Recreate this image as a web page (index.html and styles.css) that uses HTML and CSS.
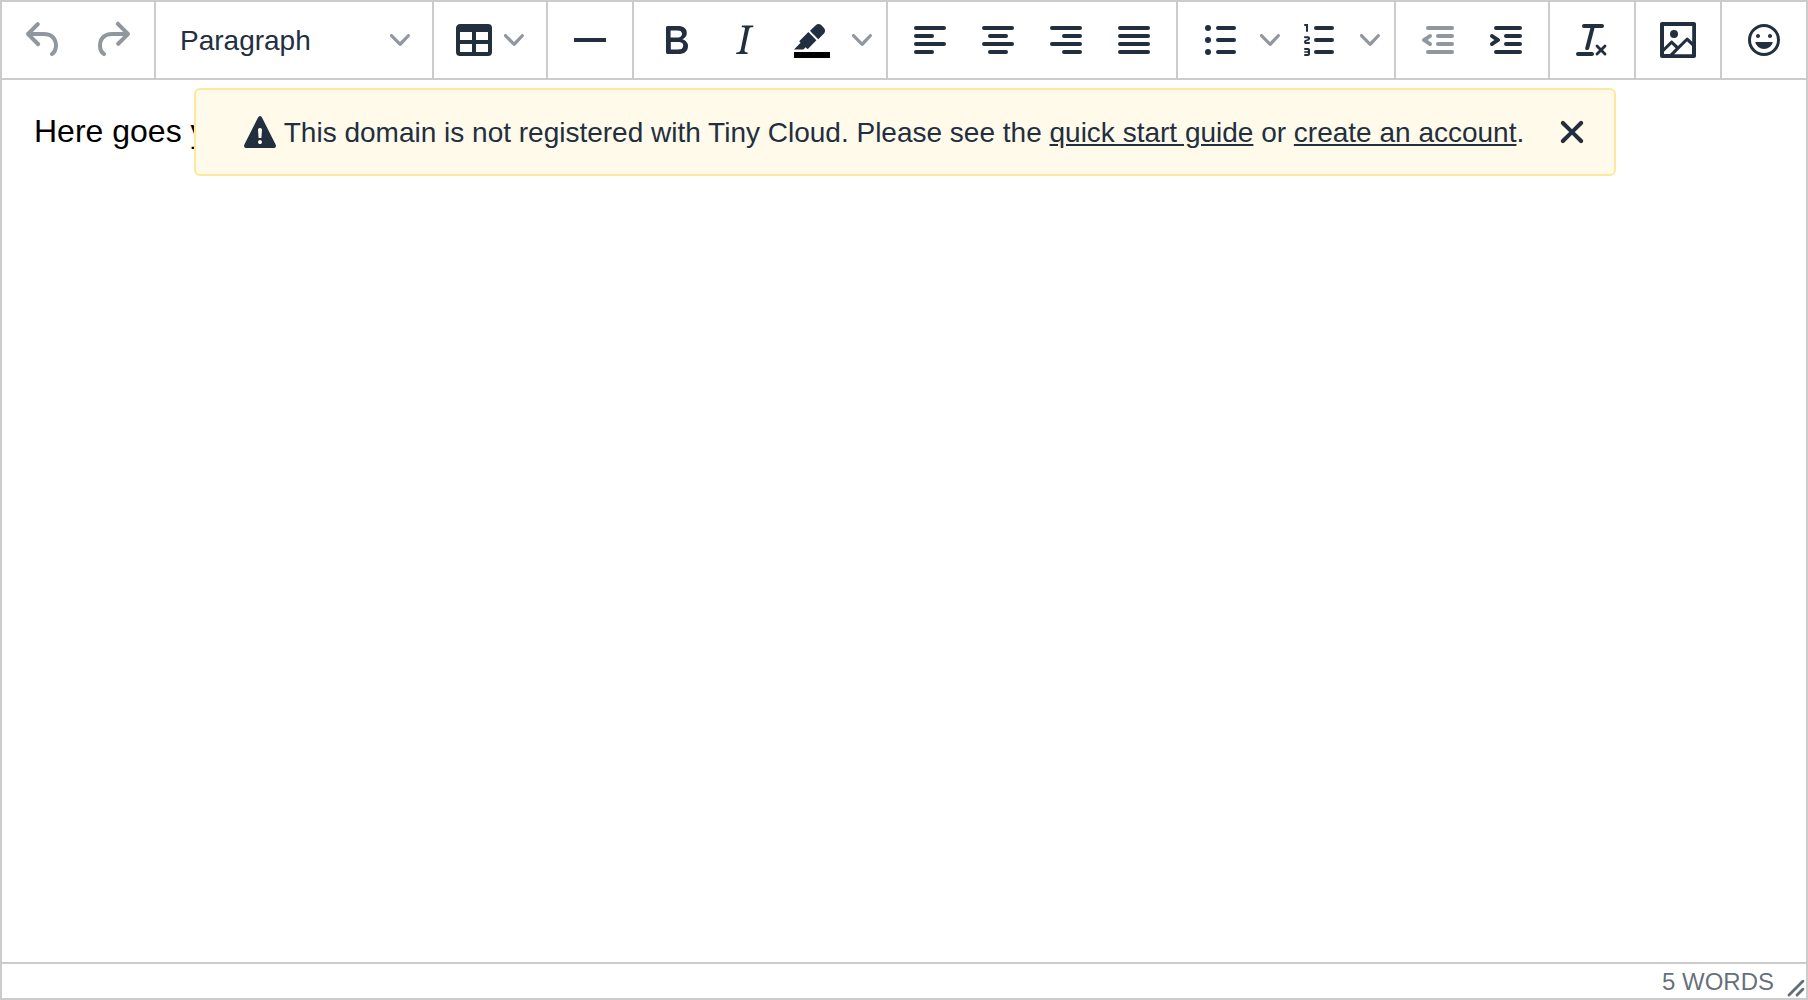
FILE: index.html
```html
<!DOCTYPE html>
<html lang="en">
<head>
<meta charset="utf-8">
<meta name="viewport" content="width=device-width, initial-scale=1">
<title>Rich text editor</title>
<link rel="stylesheet" href="styles.css">
</head>
<body>
<div class="editor">
  <div class="toolbar" role="toolbar" aria-label="Formatting">
    <div class="group">
      <button class="tool" type="button" aria-label="Undo" disabled><svg class="icon" viewBox="0 0 24 24"><path d="M6.4 8H12c3.7 0 6.2 2 6.8 5.1.6 2.7-.4 5.6-2.3 6.8a1 1 0 01-1-1.8c1.1-.6 1.8-2.7 1.4-4.6-.5-2.1-2.1-3.5-4.9-3.5H6.4l3.3 3.3a1 1 0 11-1.4 1.4l-5-5a1 1 0 010-1.4l5-5a1 1 0 011.4 1.4L6.4 8z"/></svg></button>
      <button class="tool" type="button" aria-label="Redo" disabled><svg class="icon" viewBox="0 0 24 24"><path d="M17.6 10H12c-2.8 0-4.4 1.4-4.9 3.5-.4 2 .3 4 1.4 4.6a1 1 0 11-1 1.8c-2-1.2-2.9-4.1-2.3-6.8.6-3 3-5.1 6.8-5.1h5.6l-3.3-3.3a1 1 0 111.4-1.4l5 5a1 1 0 010 1.4l-5 5a1 1 0 01-1.4-1.4l3.3-3.3z"/></svg></button>
    </div>
    <div class="group">
      <div class="format">
        <select class="format-select" aria-label="Block format">
          <option>Paragraph</option>
          <option>Heading 1</option>
          <option>Heading 2</option>
          <option>Heading 3</option>
        </select>
        <svg class="chevron" viewBox="0 0 10 10"><path d="M8.7 2.2c.3-.3.8-.3 1 0 .4.4.4.9 0 1.2L5.7 7.8c-.3.3-.9.3-1.2 0L.2 3.4a.8.8 0 010-1.2c.3-.3.8-.3 1.1 0L5 6l3.7-3.8z"/></svg>
      </div>
    </div>
    <div class="group">
      <button class="tool tool-menu" type="button" aria-label="Table" aria-haspopup="true"><svg class="icon" viewBox="0 0 24 24"><path fill-rule="evenodd" d="M19 4a2 2 0 012 2v12a2 2 0 01-2 2H5a2 2 0 01-2-2V6c0-1.1.9-2 2-2h14zM5 14v4h6v-4H5zm14 0h-6v4h6v-4zm0-6h-6v4h6V8zM5 12h6V8H5v4z"/></svg><svg class="chevron" viewBox="0 0 10 10"><path d="M8.7 2.2c.3-.3.8-.3 1 0 .4.4.4.9 0 1.2L5.7 7.8c-.3.3-.9.3-1.2 0L.2 3.4a.8.8 0 010-1.2c.3-.3.8-.3 1.1 0L5 6l3.7-3.8z"/></svg></button>
    </div>
    <div class="group">
      <button class="tool" type="button" aria-label="Horizontal line"><svg class="icon" viewBox="0 0 24 24"><path d="M4 11h16v2H4z"/></svg></button>
    </div>
    <div class="group">
      <button class="tool" type="button" aria-label="Bold"><svg class="icon" viewBox="0 0 24 24"><path d="M7.8 19c-.3 0-.5 0-.6-.2l-.2-.5V5.7c0-.2 0-.4.2-.5l.6-.2h5c1.5 0 2.7.3 3.5 1 .7.6 1.1 1.4 1.1 2.5a3 3 0 01-.6 1.9c-.4.6-1 1-1.6 1.2.4.1.9.3 1.3.6s.8.7 1 1.2c.4.4.5 1 .5 1.6 0 1.3-.4 2.3-1.3 3-.8.7-2.1 1-3.8 1H7.8zm5-8.3c.6 0 1.2-.1 1.6-.5.4-.3.6-.7.6-1.3 0-1.1-.8-1.7-2.3-1.7H9.3v3.5h3.4zm.5 6c.7 0 1.3-.1 1.7-.4.4-.4.6-.9.6-1.5s-.2-1-.7-1.4c-.4-.3-1-.4-2-.4H9.4v3.8h4z"/></svg></button>
      <button class="tool" type="button" aria-label="Italic"><svg class="icon" viewBox="0 0 24 24"><path d="M16.7 4.7l-.1.9h-.3c-.6 0-1 0-1.4.3-.3.3-.4.6-.5 1.1l-2.1 9.8v.6c0 .5.4.8 1.4.8h.2l-.2.8H8l.2-.8h.2c1.1 0 1.8-.5 2-1.5l2-9.8.1-.5c0-.6-.4-.8-1.4-.8h-.3l.2-.9h5.8z"/></svg></button>
      <button class="tool" type="button" aria-label="Background color"><svg class="icon" viewBox="0 0 24 24"><path class="swatch" d="M3 18h18v3H3z"/><path d="M7.7 16.7H3l3.3-3.3-.7-.8L10.2 8l4 4.1-4 4.2c-.2.2-.6.2-.8 0l-.6-.7-1.1 1.1zm5-7.5L11 7.4l3-2.9a2 2 0 012.6 0L18 6c.7.7.7 2 0 2.7l-2.9 2.9-1.8-1.8-.5-.6"/></svg></button>
      <button class="tool tool-arrow" type="button" aria-label="Background color options"><svg class="chevron" viewBox="0 0 10 10"><path d="M8.7 2.2c.3-.3.8-.3 1 0 .4.4.4.9 0 1.2L5.7 7.8c-.3.3-.9.3-1.2 0L.2 3.4a.8.8 0 010-1.2c.3-.3.8-.3 1.1 0L5 6l3.7-3.8z"/></svg></button>
    </div>
    <div class="group">
      <button class="tool" type="button" aria-label="Align left"><svg class="icon" viewBox="0 0 24 24"><path d="M5 5h14a1 1 0 010 2H5a1 1 0 110-2zm0 4h8a1 1 0 010 2H5a1 1 0 110-2zm0 4h14a1 1 0 010 2H5a1 1 0 010-2zm0 4h8a1 1 0 010 2H5a1 1 0 010-2z"/></svg></button>
      <button class="tool" type="button" aria-label="Align center"><svg class="icon" viewBox="0 0 24 24"><path d="M5 5h14a1 1 0 010 2H5a1 1 0 110-2zm3 4h8a1 1 0 010 2H8a1 1 0 110-2zm-3 4h14a1 1 0 010 2H5a1 1 0 010-2zm3 4h8a1 1 0 010 2H8a1 1 0 010-2z"/></svg></button>
      <button class="tool" type="button" aria-label="Align right"><svg class="icon" viewBox="0 0 24 24"><path d="M5 5h14a1 1 0 010 2H5a1 1 0 110-2zm6 4h8a1 1 0 010 2h-8a1 1 0 110-2zm-6 4h14a1 1 0 010 2H5a1 1 0 010-2zm6 4h8a1 1 0 010 2h-8a1 1 0 010-2z"/></svg></button>
      <button class="tool" type="button" aria-label="Justify"><svg class="icon" viewBox="0 0 24 24"><path d="M5 5h14a1 1 0 010 2H5a1 1 0 110-2zm0 4h14a1 1 0 010 2H5a1 1 0 110-2zm0 4h14a1 1 0 010 2H5a1 1 0 010-2zm0 4h14a1 1 0 010 2H5a1 1 0 010-2z"/></svg></button>
    </div>
    <div class="group">
      <button class="tool" type="button" aria-label="Bullet list"><svg class="icon" viewBox="0 0 24 24"><path d="M11 5h8a1 1 0 010 2h-8a1 1 0 010-2zm0 6h8a1 1 0 010 2h-8a1 1 0 010-2zm0 6h8a1 1 0 010 2h-8a1 1 0 010-2z"/><circle cx="6" cy="6" r="1.5"/><circle cx="6" cy="12" r="1.5"/><circle cx="6" cy="18" r="1.5"/></svg></button>
      <button class="tool tool-arrow" type="button" aria-label="Bullet list options"><svg class="chevron" viewBox="0 0 10 10"><path d="M8.7 2.2c.3-.3.8-.3 1 0 .4.4.4.9 0 1.2L5.7 7.8c-.3.3-.9.3-1.2 0L.2 3.4a.8.8 0 010-1.2c.3-.3.8-.3 1.1 0L5 6l3.7-3.8z"/></svg></button>
      <button class="tool" type="button" aria-label="Numbered list"><svg class="icon" viewBox="0 0 24 24"><path d="M10 17h8a1 1 0 010 2h-8a1 1 0 010-2zm0-6h8a1 1 0 010 2h-8a1 1 0 010-2zm0-6h8a1 1 0 010 2h-8a1 1 0 110-2zM6 4v3.5c0 .3-.2.5-.5.5a.5.5 0 01-.5-.5V5h-.5a.5.5 0 010-1H6zm-1 8.8l.2.2h1.3c.3 0 .5.2.5.5s-.2.5-.5.5H4.9a1 1 0 01-.9-1V13c0-.4.3-.8.6-1l1.2-.4.2-.3a.2.2 0 00-.2-.2H4.5a.5.5 0 01-.5-.5c0-.3.2-.5.5-.5h1.6c.5 0 .9.4.9 1v.1c0 .4-.3.8-.6 1l-1.2.4-.2.3zM7 17v2c0 .6-.4 1-1 1H4.5a.5.5 0 010-1h1.2c.2 0 .3-.1.3-.3 0-.2-.1-.3-.3-.3H4.4a.4.4 0 110-.8h1.3c.2 0 .3-.1.3-.3 0-.2-.1-.3-.3-.3H4.5a.5.5 0 110-1H6c.6 0 1 .4 1 1z"/></svg></button>
      <button class="tool tool-arrow" type="button" aria-label="Numbered list options"><svg class="chevron" viewBox="0 0 10 10"><path d="M8.7 2.2c.3-.3.8-.3 1 0 .4.4.4.9 0 1.2L5.7 7.8c-.3.3-.9.3-1.2 0L.2 3.4a.8.8 0 010-1.2c.3-.3.8-.3 1.1 0L5 6l3.7-3.8z"/></svg></button>
    </div>
    <div class="group">
      <button class="tool" type="button" aria-label="Decrease indent" disabled><svg class="icon" viewBox="0 0 24 24"><path d="M7 5h12a1 1 0 010 2H7a1 1 0 110-2zm5 4h7a1 1 0 010 2h-7a1 1 0 010-2zm0 4h7a1 1 0 010 2h-7a1 1 0 010-2zm-5 4h12a1 1 0 010 2H7a1 1 0 010-2zm1.6-3.8a1 1 0 01-1.2 1.6l-3-2a1 1 0 010-1.6l3-2a1 1 0 011.2 1.6L6.8 12l1.8 1.2z"/></svg></button>
      <button class="tool" type="button" aria-label="Increase indent"><svg class="icon" viewBox="0 0 24 24"><path d="M7 5h12a1 1 0 010 2H7a1 1 0 110-2zm5 4h7a1 1 0 010 2h-7a1 1 0 010-2zm0 4h7a1 1 0 010 2h-7a1 1 0 010-2zm-5 4h12a1 1 0 010 2H7a1 1 0 010-2zm-2.6-3.8L6.2 12l-1.8-1.2a1 1 0 011.2-1.6l3 2a1 1 0 010 1.6l-3 2a1 1 0 11-1.2-1.6z"/></svg></button>
    </div>
    <div class="group">
      <button class="tool" type="button" aria-label="Clear formatting"><svg class="icon" viewBox="0 0 24 24"><path d="M13.2 6a1 1 0 010 .2l-2.6 10a1 1 0 01-1 .8h-.2a.8.8 0 01-.8-1l2.6-10H8a1 1 0 110-2h9a1 1 0 010 2h-3.8zM5 18h7a1 1 0 010 2H5a1 1 0 010-2zm13 1.5L16.5 18 15 19.5a.7.7 0 01-1-1l1.5-1.5-1.5-1.5a.7.7 0 011-1l1.5 1.5 1.5-1.5a.7.7 0 011 1L17.5 17l1.5 1.5a.7.7 0 01-1 1z"/></svg></button>
    </div>
    <div class="group">
      <button class="tool" type="button" aria-label="Insert image"><svg class="icon" viewBox="0 0 24 24"><path fill-rule="evenodd" d="M5 15.7l3.3-3.2c.3-.3.7-.3 1 0L12 15l4.1-4c.3-.4.8-.4 1 0l2 1.9V5H5v10.7zM5 18V19h3l2.8-2.9-2-2L5 17.9zm14-3l-2.5-2.4-6.4 6.5H19v-4zM4 3h16c.6 0 1 .4 1 1v16c0 .6-.4 1-1 1H4a1 1 0 01-1-1V4c0-.6.4-1 1-1zm6 8a2 2 0 100-4 2 2 0 000 4z"/></svg></button>
    </div>
    <div class="group">
      <button class="tool" type="button" aria-label="Emoticons"><svg class="icon" viewBox="0 0 24 24"><path d="M9 11c.6 0 1-.4 1-1s-.4-1-1-1a1 1 0 00-1 1c0 .6.4 1 1 1zm6 0c.6 0 1-.4 1-1s-.4-1-1-1a1 1 0 00-1 1c0 .6.4 1 1 1zm-3 5.5c2.1 0 4-1.5 4.4-3.5H7.6c.5 2 2.3 3.5 4.4 3.5zM12 4a8 8 0 100 16 8 8 0 000-16zm0 14.5a6.5 6.5 0 110-13 6.5 6.5 0 010 13z"/></svg></button>
    </div>
  </div>

  <main class="content">
    <div class="page" contenteditable="true" role="textbox" aria-multiline="true" aria-label="Content">
      <p class="paragraph">Here goes your initial content</p>
    </div>
    <div class="notice" role="alert">
      <svg class="icon" viewBox="0 0 24 24"><path fill-rule="evenodd" d="M19.8 18.3c.2.5.3.9 0 1.2-.1.3-.5.5-1 .5H5.2c-.5 0-.9-.2-1-.5-.3-.3-.2-.7 0-1.2L11 4.7l.5-.5.5-.2c.2 0 .3 0 .5.2.2 0 .3.3.5.5l6.8 13.6zM12 18c.3 0 .5-.1.7-.3.2-.2.3-.4.3-.7a1 1 0 00-.3-.7 1 1 0 00-.7-.3 1 1 0 00-.7.3 1 1 0 00-.3.7c0 .3.1.5.3.7.2.2.4.3.7.3zm.7-3l.3-4a.9.9 0 00-.3-.7.9.9 0 00-.7-.3c-.3 0-.5 0-.7.3-.2.2-.3.4-.3.7l.3 4h1.4z"/></svg>
      <p class="notice-text">This domain is not registered with Tiny Cloud. Please see the <a class="notice-link" href="#quick-start">quick start guide</a> or <a class="notice-link" href="#account">create an account</a>.</p>
      <button class="notice-close" type="button" aria-label="Close"><svg class="icon" viewBox="0 0 24 24"><path d="M17.3 8.2L13.4 12l3.9 3.8a1 1 0 01-1.5 1.5L12 13.4l-3.8 3.9a1 1 0 01-1.5-1.5l3.9-3.8-3.9-3.8a1 1 0 011.5-1.5l3.8 3.9 3.8-3.9a1 1 0 011.5 1.5z"/></svg></button>
    </div>
  </main>

  <footer class="statusbar">
    <button class="wordcount" type="button">5 WORDS</button>
    <svg class="resize" viewBox="0 0 10 10"><path d="M8.1 1.1A.5.5 0 119 2l-7 7A.5.5 0 111 8l7-7zM8.1 5.1A.5.5 0 119 6l-3 3A.5.5 0 115 8l3-3z"/></svg>
  </footer>
</div>
</body>
</html>
```
FILE: styles.css
```css
:root {
  --ink: #222f3e;
  --line: #cccccc;
  --muted: rgba(34, 47, 62, 0.7);
  --disabled: rgba(34, 47, 62, 0.5);
}

* {
  box-sizing: border-box;
}

body {
  margin: 0;
  background: #fff;
  color: var(--ink);
  font-family: "Liberation Sans", Arial, sans-serif;
  font-size: 28px;
}

button,
select {
  margin: 0;
  padding: 0;
  border: 0;
  background: transparent;
  color: inherit;
  font: inherit;
}

svg {
  display: block;
  flex: none;
  fill: currentColor;
}

.editor {
  display: flex;
  flex-direction: column;
  min-height: 100vh;
  border: 2px solid var(--line);
}

/* Toolbar */
.toolbar {
  display: flex;
  flex-wrap: wrap;
  border-bottom: 2px solid var(--line);
}

.group {
  display: flex;
  padding: 4px 8px;
  border-right: 2px solid var(--line);
}

.group:last-child {
  border-right: 0;
}

.tool {
  display: flex;
  align-items: center;
  justify-content: center;
  width: 68px;
  height: 68px;
}

.tool:disabled {
  color: var(--disabled);
}

.tool-menu {
  justify-content: flex-start;
  gap: 6px;
  width: 96px;
  padding-left: 8px;
}

.tool-arrow {
  width: 32px;
}

.icon {
  width: 48px;
  height: 48px;
}

.swatch {
  fill: #000;
}

.chevron {
  width: 20px;
  height: 20px;
  color: var(--disabled);
}

.format {
  display: grid;
  align-items: center;
  width: 260px;
}

.format-select {
  grid-area: 1 / 1;
  height: 68px;
  padding: 0 48px 0 16px;
  appearance: none;
}

.format .chevron {
  grid-area: 1 / 1;
  justify-self: end;
  margin-right: 14px;
  pointer-events: none;
}

/* Editing area */
.content {
  position: relative;
  display: flex;
  flex: 1;
}

.page {
  flex: 1;
  padding: 32px;
  color: #000;
  font-size: 32px;
  line-height: 38px;
  outline: 0;
}

.paragraph {
  margin: 0;
}

.notice {
  position: absolute;
  top: 8px;
  left: 2px;
  right: 0;
  display: flex;
  align-items: center;
  width: fit-content;
  max-width: 100%;
  min-height: 88px;
  margin: 0 auto;
  padding: 0 18px 0 40px;
  border: 2px solid #ffe89d;
  border-radius: 6px;
  background: #fffaea;
}

.notice-text {
  margin: 0;
  padding-top: 2px;
}

.notice-link {
  color: inherit;
}

.notice-close {
  margin-left: 24px;
}

/* Status bar */
.statusbar {
  display: flex;
  align-items: flex-end;
  justify-content: flex-end;
  gap: 12px;
  height: 36px;
  border-top: 2px solid var(--line);
  color: var(--muted);
}

.wordcount {
  height: 34px;
  padding-top: 2px;
  font-size: 24px;
}

.resize {
  width: 20px;
  height: 20px;
}
```
